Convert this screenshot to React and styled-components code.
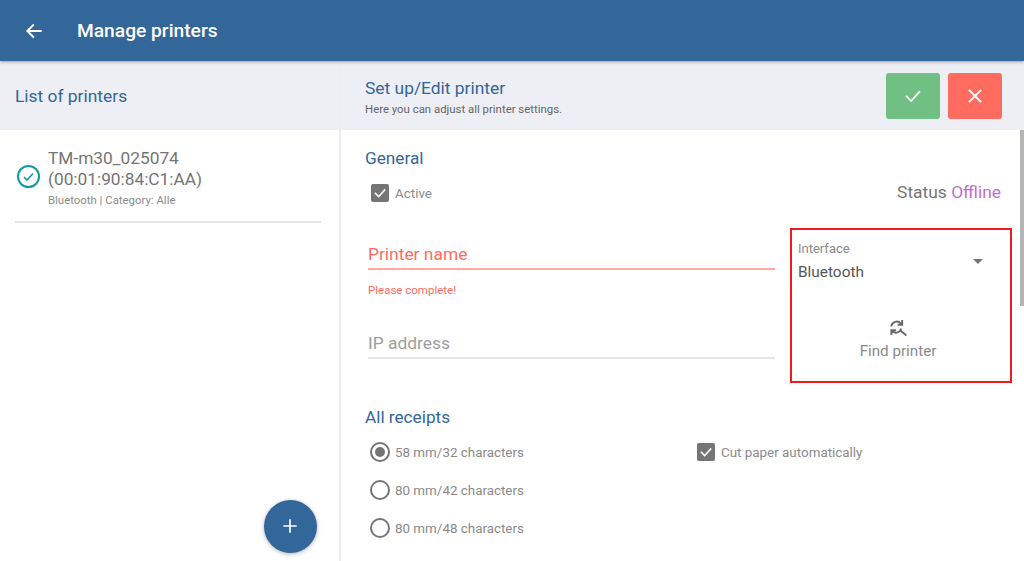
import React from 'react';
import styled, { createGlobalStyle } from 'styled-components';

const GlobalStyle = createGlobalStyle`
  html, body {
    margin: 0;
    padding: 0;
    background: #fff;
    font-family: Roboto, "Liberation Sans", sans-serif;
    overflow: hidden;
  }
`;

const Page = styled.div`
  width: 1024px;
  height: 561px;
  display: flex;
  flex-direction: column;
  overflow: hidden;
`;

const TopBar = styled.header`
  height: 61px;
  flex: none;
  display: flex;
  align-items: center;
  background: #336699;
  box-shadow: 0 1px 3px rgba(0, 0, 0, 0.35);
  position: relative;
  z-index: 2;
`;

const BackButton = styled.div`
  width: 77px;
  height: 61px;
  display: flex;
  align-items: center;
  padding-left: 24px;
  box-sizing: border-box;
`;

const TopTitle = styled.h1`
  margin: 0;
  color: #fff;
  font-size: 19.2px;
  font-weight: 500;
`;

const Body = styled.div`
  flex: 1;
  display: flex;
  min-height: 0;
`;

const LeftPanel = styled.aside`
  width: 341px;
  flex: none;
  box-sizing: border-box;
  border-right: 2px solid #eeeeee;
  display: flex;
  flex-direction: column;
  position: relative;
`;

const SubHeader = styled.div`
  height: 69px;
  flex: none;
  box-sizing: border-box;
  background: #edeff5;
  display: flex;
  align-items: center;
  justify-content: space-between;
  padding: ${(p) => p.$padding || '2px 15px 0'};
`;

const SubTitle = styled.h2`
  margin: 0;
  color: #336699;
  font-size: 17.4px;
  line-height: 21px;
  font-weight: 400;
`;

const PrinterRow = styled.div`
  margin: 0 18px 0 15px;
  padding: 18px 0 13px;
  border-bottom: 2px solid #e5e5e5;
  display: flex;
  align-items: center;
  gap: 7px;
`;

const StatusIcon = styled.svg`
  flex: none;
  margin: 0 0 3px 1px;
`;

const PrinterInfo = styled.div`
  display: flex;
  flex-direction: column;
`;

const PrinterName = styled.div`
  color: #757575;
  font-size: 17.3px;
  line-height: 21px;
`;

const PrinterMeta = styled.div`
  color: #8a8a8a;
  font-size: 11.4px;
  line-height: 16px;
  margin-top: 2px;
`;

const Fab = styled.div`
  position: absolute;
  left: 264px;
  bottom: 8px;
  width: 53px;
  height: 53px;
  border-radius: 50%;
  background: #336699;
  box-shadow: 0 1px 4px rgba(0, 0, 0, 0.3);
  display: flex;
  align-items: center;
  justify-content: center;
  padding: 0 1px 1px 0;
  box-sizing: border-box;
`;

const RightPanel = styled.main`
  flex: 1;
  display: flex;
  flex-direction: column;
  position: relative;
  min-width: 0;
`;

const HeadingGroup = styled.div`
  display: flex;
  flex-direction: column;
  padding-top: 2px;
`;

const HeadingHint = styled.div`
  color: #666;
  font-size: 11.4px;
  line-height: 14px;
  margin-top: 3px;
`;

const ActionGroup = styled.div`
  display: flex;
  gap: 8px;
`;

const ActionButton = styled.div`
  width: 54px;
  height: 46px;
  border-radius: 3px;
  background: ${(p) => p.$bg};
  display: flex;
  align-items: center;
  justify-content: center;
`;

const Content = styled.div`
  flex: 1;
  padding: 18px 12px 0 24px;
  display: flex;
  flex-direction: column;
`;

const SectionTitle = styled.h3`
  margin: 0;
  color: #336699;
  font-size: 17.2px;
  line-height: 20px;
  font-weight: 400;
`;

const ActiveRow = styled.div`
  display: flex;
  justify-content: space-between;
  align-items: center;
  margin-top: 10px;
  padding: 0 11px 0 6px;
  height: 30px;
`;

const CheckLine = styled.div`
  display: flex;
  align-items: center;
  gap: 6px;
  height: 38px;
`;

const OptionLabel = styled.span`
  color: #8a8a8a;
  font-size: 13.4px;
`;

const CheckBox = styled.span`
  width: 18px;
  height: 18px;
  border-radius: 2px;
  background: #757575;
  display: flex;
  align-items: center;
  justify-content: center;
`;

const Status = styled.div`
  color: #757575;
  font-size: 17.4px;
  margin-top: -2px;
`;

const StatusValue = styled.span`
  color: #c06cd2;
`;

const FormRow = styled.div`
  display: flex;
  gap: 15px;
  margin: 20px 0 0 3px;
`;

const FieldColumn = styled.div`
  width: 407px;
  flex: none;
  padding-top: 14px;
`;

const Field = styled.div`
  height: 28px;
  box-sizing: border-box;
  border-bottom: 2px solid ${(p) => (p.$error ? '#ffa8a0' : '#e5e5e5')};
  color: ${(p) => (p.$error ? '#ff6b5e' : '#9e9e9e')};
  font-size: 17.4px;
  line-height: 24px;
`;

const FieldError = styled.div`
  color: #ff6b5e;
  font-size: 11.5px;
  line-height: 14px;
  margin: 13px 0 34px;
`;

const InterfaceBox = styled.div`
  width: 222px;
  height: 155px;
  box-sizing: border-box;
  border: 2px solid #f01c1c;
  padding: 11px 6px 0;
  display: flex;
  flex-direction: column;
`;

const SelectRow = styled.div`
  display: flex;
  justify-content: space-between;
  align-items: center;
`;

const SelectLabel = styled.div`
  color: #8a8a8a;
  font-size: 13px;
  line-height: 16px;
`;

const SelectValue = styled.div`
  color: #555;
  font-size: 15.4px;
  line-height: 20px;
  margin-top: 5px;
`;

const Caret = styled.span`
  width: 0;
  height: 0;
  margin-right: 21px;
  border-left: 5px solid transparent;
  border-right: 5px solid transparent;
  border-top: 5px solid #757575;
`;

const FindButton = styled.div`
  margin: 36px 6px 0 0;
  display: flex;
  flex-direction: column;
  align-items: center;
  gap: 4px;
  color: #8a8a8a;
  font-size: 15.2px;
`;

const ReceiptSection = styled.div`
  margin-top: 24px;
`;

const ReceiptGrid = styled.div`
  display: grid;
  grid-template-columns: 327px 1fr;
  margin: 6px 0 0 5px;
`;

const RadioLine = styled.div`
  display: flex;
  align-items: center;
  gap: 5px;
  height: 38.2px;
`;

const Radio = styled.span`
  width: 20px;
  height: 20px;
  box-sizing: border-box;
  border: 2px solid #757575;
  border-radius: 50%;
  display: flex;
  align-items: center;
  justify-content: center;
`;

const RadioDot = styled.span`
  width: 10px;
  height: 10px;
  border-radius: 50%;
  background: #757575;
`;

const ScrollThumb = styled.div`
  position: absolute;
  right: 0;
  top: 69px;
  width: 4px;
  height: 176px;
  background: #b5b5b5;
`;

const Stroke = ({ d, size, color = '#fff', width = 2 }) => (
  <svg width={size} height={size} viewBox="0 0 24 24" fill="none" stroke={color} strokeWidth={width} strokeLinecap="square">
    <path d={d} />
  </svg>
);

const receipts = ['58 mm/32 characters', '80 mm/42 characters', '80 mm/48 characters'];

export default function App() {
  return (
    <Page>
      <GlobalStyle />
      <TopBar>
        <BackButton>
          <Stroke size={20} width={2.4} d="M20 12H5M11 5l-7 7 7 7" />
        </BackButton>
        <TopTitle>Manage printers</TopTitle>
      </TopBar>
      <Body>
        <LeftPanel>
          <SubHeader>
            <SubTitle>List of printers</SubTitle>
          </SubHeader>
          <PrinterRow>
            <StatusIcon width="25" height="25" viewBox="0 0 25 25" fill="none" stroke="#0e9aa7">
              <circle cx="12.5" cy="12.5" r="10.5" strokeWidth="2" />
              <path d="M8 13l3 3 6-6.5" strokeWidth="1.6" />
            </StatusIcon>
            <PrinterInfo>
              <PrinterName>TM-m30_025074</PrinterName>
              <PrinterName>(00:01:90:84:C1:AA)</PrinterName>
              <PrinterMeta>Bluetooth | Category: Alle</PrinterMeta>
            </PrinterInfo>
          </PrinterRow>
          <Fab>
            <Stroke size={20} d="M12 5v14M5 12h14" width={2} />
          </Fab>
        </LeftPanel>
        <RightPanel>
          <SubHeader $padding="0 22px 0 24px">
            <HeadingGroup>
              <SubTitle>Set up/Edit printer</SubTitle>
              <HeadingHint>Here you can adjust all printer settings.</HeadingHint>
            </HeadingGroup>
            <ActionGroup>
              <ActionButton $bg="#70bf83">
                <Stroke size={22} d="M5 12.5l5 5 9-10" />
              </ActionButton>
              <ActionButton $bg="#ff6b5e">
                <Stroke size={22} d="M6 6l12 12M18 6L6 18" />
              </ActionButton>
            </ActionGroup>
          </SubHeader>
          <Content>
            <SectionTitle>General</SectionTitle>
            <ActiveRow>
              <CheckLine>
                <CheckBox>
                  <Stroke size={16} d="M5 12.5l5 5 9-10" width={2.4} />
                </CheckBox>
                <OptionLabel>Active</OptionLabel>
              </CheckLine>
              <Status>Status <StatusValue>Offline</StatusValue></Status>
            </ActiveRow>
            <FormRow>
              <FieldColumn>
                <Field $error>Printer name</Field>
                <FieldError>Please complete!</FieldError>
                <Field>IP address</Field>
              </FieldColumn>
              <InterfaceBox>
                <SelectRow>
                  <div>
                    <SelectLabel>Interface</SelectLabel>
                    <SelectValue>Bluetooth</SelectValue>
                  </div>
                  <Caret />
                </SelectRow>
                <FindButton>
                  <svg width="20" height="20" viewBox="0 0 20 20" fill="none" stroke="#6a6a6a" strokeWidth="1.9">
                    <path d="M3.2 8.5a5.6 5.6 0 0 1 9.8-3l1 1M14.2 2v4.8H9.6" />
                    <path d="M13.2 10.5a5.6 5.6 0 0 1-8.8 3l-1-1M3.4 17v-4.8H8" />
                    <path d="M12.4 12.4l6 5" />
                  </svg>
                  Find printer
                </FindButton>
              </InterfaceBox>
            </FormRow>
            <ReceiptSection>
              <SectionTitle>All receipts</SectionTitle>
              <ReceiptGrid>
                <div>
                  {receipts.map((label, i) => (
                    <RadioLine key={label}>
                      <Radio>{i === 0 && <RadioDot />}</Radio>
                      <OptionLabel>{label}</OptionLabel>
                    </RadioLine>
                  ))}
                </div>
                <CheckLine>
                  <CheckBox>
                    <Stroke size={16} d="M5 12.5l5 5 9-10" width={2.4} />
                  </CheckBox>
                  <OptionLabel>Cut paper automatically</OptionLabel>
                </CheckLine>
              </ReceiptGrid>
            </ReceiptSection>
          </Content>
          <ScrollThumb />
        </RightPanel>
      </Body>
    </Page>
  );
}
